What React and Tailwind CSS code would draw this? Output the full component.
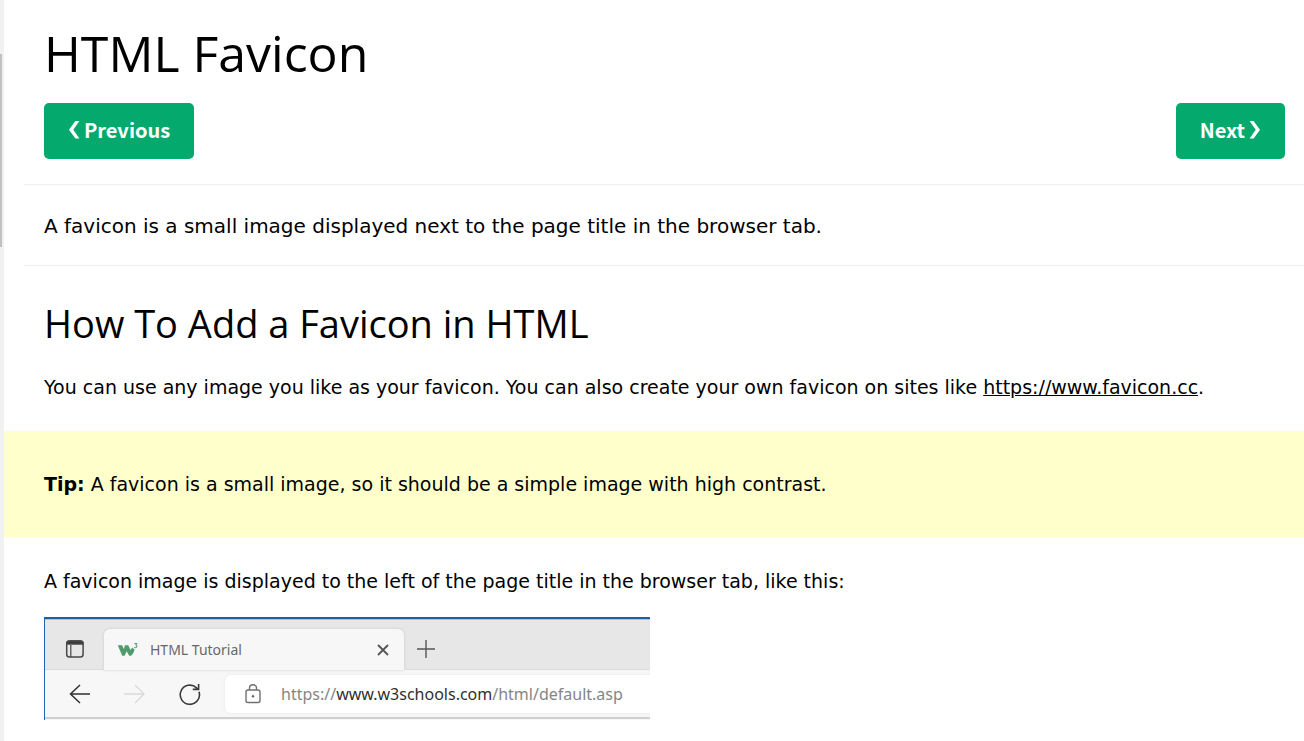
const headingFont = "font-['Open_Sans','Noto_Sans',sans-serif]";

function ScrollTrack() {
  return (
    <div className="w-1 shrink-0 bg-[#f1f1f1] pt-[54px]" aria-hidden="true">
      <div className="h-[193px] w-0.5 bg-[#c1c1c1]" />
    </div>
  );
}

function NavLink({ href, children }) {
  return (
    <a
      href={href}
      className="flex h-14 items-center gap-1 rounded-[5px] bg-[#04aa6d] px-6 pb-0.5 font-['Noto_Sans_CJK_JP','Noto_Sans_CJK_SC',sans-serif] text-[20px] font-bold text-white"
    >
      {children}
    </a>
  );
}

function Chevron({ flip }) {
  return (
    <svg viewBox="0 0 12 20" className="h-5 w-3" fill="#fff" aria-hidden="true">
      <path
        transform={flip ? "translate(12 0) scale(-1 1)" : undefined}
        d="M7.4 1H11.4L5.3 9.8L11.4 18.6H7.4L1 9.8Z"
      />
    </svg>
  );
}

function BrowserPreview() {
  return (
    <div className="flex h-[103px] w-[606px] max-w-full flex-col overflow-hidden border-t-2 border-l border-t-[#1a5fa8] border-l-[#1d68ad] bg-[#f7f7f7] font-['Noto_Sans',sans-serif]">
      <div className="flex h-[51px] shrink-0 items-end border-t border-[#bdbdbd] bg-[#e7e7e7]">
        <div className="flex h-[41px] w-[59px] items-center border-b border-[#dadada] pl-5">
          <svg viewBox="0 0 20 20" className="h-5 w-5" fill="none" stroke="#484848" strokeWidth="1.5" aria-hidden="true">
            <rect x="1.7" y="2" width="16.4" height="16" rx="2.8" />
            <path d="M1.8 5V4.3Q1.8 2 4.3 2H15.5Q18 2 18 4.3V5Z" fill="#383838" />
            <path d="M5.8 6V18" strokeWidth="1.2" />
          </svg>
        </div>
        <div className="flex h-[41px] w-[300px] items-center rounded-t-md bg-[#f7f7f7] pr-3 pl-3 shadow-[0_0_3px_#c8c8c8]">
          <svg viewBox="0 0 22 16" className="h-4 w-[22px]" fill="#4f9b6b" aria-hidden="true">
            <path d="M1.8 3.2H6L8 7.2L8.8 3.2H12.2L14.6 8L16.2 5.5L18.6 7.5Q18 11 15.2 13.8H13.2L10.7 9.2L8.6 13.8H6.2Z" />
            <path d="M18.4 1.6H21L19.6 3.2Q21.5 3.4 20.9 5Q20.1 6.3 18.2 5.4" fill="none" stroke="#4f9b6b" strokeWidth="1" />
          </svg>
          <span className="ml-3 grow text-[14px] text-[#686868]">HTML Tutorial</span>
          <svg viewBox="0 0 18 18" className="h-[18px] w-[18px]" stroke="#555" strokeWidth="1.8" aria-hidden="true">
            <path d="M4 4L14 14M14 4L4 14" />
          </svg>
        </div>
        <div className="flex h-[41px] grow items-center border-b border-[#dadada] pl-3">
          <svg viewBox="0 0 20 20" className="h-5 w-5" stroke="#555" strokeWidth="1.4" aria-hidden="true">
            <path d="M1 10H19M10 1V19" />
          </svg>
        </div>
      </div>
      <div className="flex h-[49px] shrink-0 items-center border-b-2 border-[#cfcfcf] pl-6">
        <svg viewBox="0 0 22 22" className="h-[22px] w-[22px]" fill="none" stroke="#303030" strokeWidth="1.5" aria-hidden="true">
          <path d="M21 11H1.5M11 2L1.5 11L11 20" />
        </svg>
        <svg viewBox="0 0 22 22" className="ml-8 h-[22px] w-[22px]" fill="none" stroke="#dadada" strokeWidth="1.4" aria-hidden="true">
          <path d="M1 11H21M12 2L21 11L12 20" />
        </svg>
        <svg viewBox="0 0 24 24" className="ml-8 h-6 w-6" fill="none" stroke="#3c3c3c" strokeWidth="1.6" aria-hidden="true">
          <path d="M22 9.8A9.6 9.6 0 1 1 19.5 5.8L21 7M21.6 2V7.4H15.8" />
        </svg>
        <div className="ml-6 flex h-[38px] grow items-center rounded-l-md bg-white pl-[18px] shadow-[0_0_3px_#e4e4e4]">
          <svg viewBox="0 0 20 22" className="h-[22px] w-5 shrink-0" fill="none" stroke="#707070" strokeWidth="1.4" aria-hidden="true">
            <rect x="3" y="7" width="14" height="12.5" rx="2" />
            <path d="M6.5 7V5Q6.5 1.8 10 1.8T13.5 5V7" />
            <circle cx="10" cy="13.3" r="1.2" fill="#606060" stroke="none" />
          </svg>
          <span className="ml-[18px] whitespace-nowrap text-[16px] text-[#858585]">
            https://<span className="text-[#303030]">www.w3schools.com</span>/html/default.asp
          </span>
        </div>
      </div>
    </div>
  );
}

export default function App() {
  return (
    <div className="flex min-h-screen bg-white text-black">
      <ScrollTrack />
      <main className="min-w-0 grow pb-[21px] font-['DejaVu_Sans',Verdana,sans-serif] text-[19px] leading-7">
        <div className="pl-5">
          <h1 className={`${headingFont} pt-[18px] pl-5 text-[50px] leading-[70px] font-normal`}>HTML Favicon</h1>
          <nav className="mt-[15px] flex justify-between pr-[19px] pb-[25px] pl-5">
            <NavLink href="#previous">
              <Chevron />
              Previous
            </NavLink>
            <NavLink href="#next">
              Next
              <Chevron flip />
            </NavLink>
          </nav>
          <p className="border-y border-[#eeeeee] pt-[27px] pb-[25px] pl-5 text-[20px]">
            A favicon is a small image displayed next to the page title in the browser tab.
          </p>
          <h2 className={`${headingFont} mt-[27px] pl-5 text-[38px] leading-[60px] font-normal`}>
            How To Add a Favicon in HTML
          </h2>
          <p className="mt-5 pl-5">
            You can use any image you like as your favicon. You can also create your own favicon on sites like{" "}
            <a href="https://www.favicon.cc" className="underline">https://www.favicon.cc</a>.
          </p>
        </div>
        <div className="mt-[30px] bg-[#ffffcc] px-10 py-[39px]">
          <p>
            <strong>Tip:</strong> A favicon is a small image, so it should be a simple image with high contrast.
          </p>
        </div>
        <div className="px-10 pt-[30px]">
          <p className="mb-[22px]">
            A favicon image is displayed to the left of the page title in the browser tab, like this:
          </p>
          <BrowserPreview />
        </div>
      </main>
    </div>
  );
}
